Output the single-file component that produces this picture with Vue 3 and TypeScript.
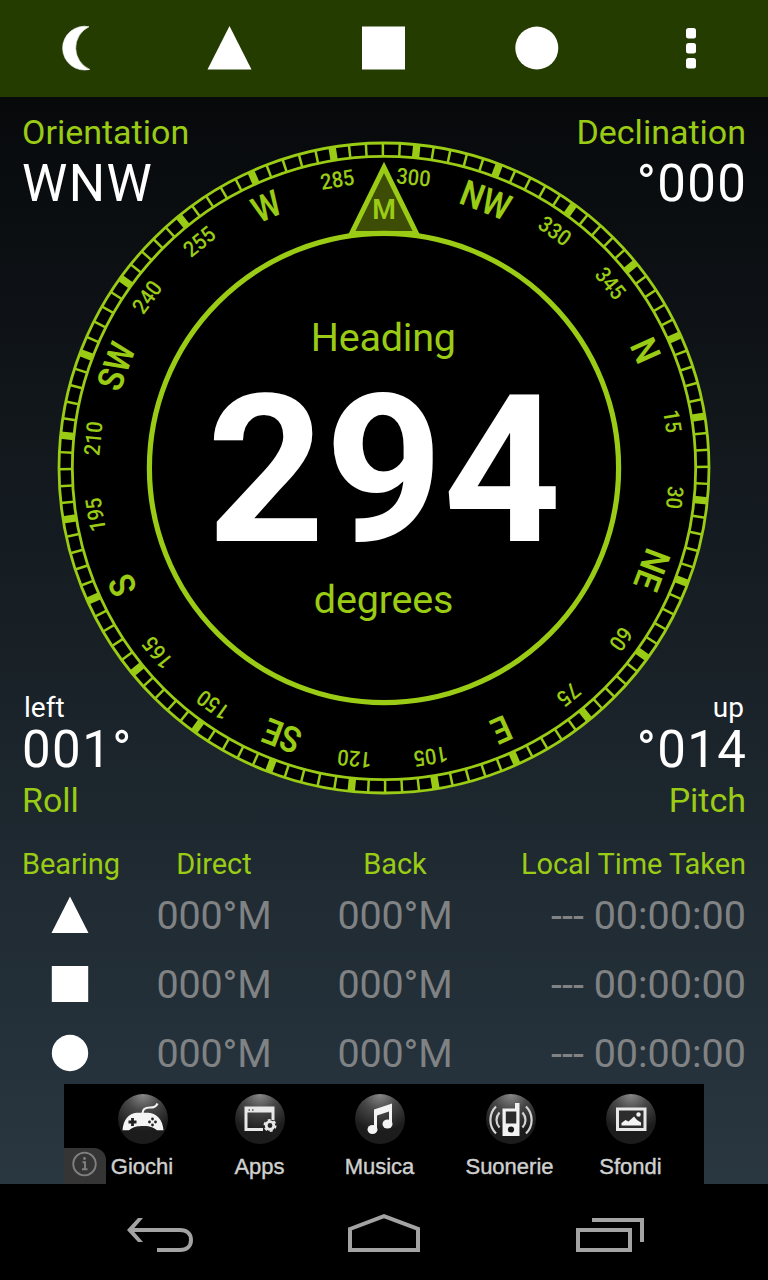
<script setup lang="ts">
interface DialLabel {
  angle: number
  text: string
  cardinal: boolean
}

type Shape = 'triangle' | 'square' | 'circle'

const heading = 294.2

const cardinals: Record<number, string> = {
  0: 'N', 45: 'NE', 90: 'E', 135: 'SE', 180: 'S', 225: 'SW', 270: 'W', 315: 'NW',
}

const labels: DialLabel[] = Array.from({ length: 24 }, (_, i) => {
  const deg = i * 15
  return { angle: deg - heading, text: cardinals[deg] ?? String(deg), cardinal: deg in cardinals }
})

const ticks = Array.from({ length: 120 }, (_, i) => ({
  angle: i * 3 - heading,
  major: i % 5 === 0,
}))

const bearings: { shape: Shape; direct: string; back: string; time: string }[] = [
  { shape: 'triangle', direct: '000°M', back: '000°M', time: '--- 00:00:00' },
  { shape: 'square', direct: '000°M', back: '000°M', time: '--- 00:00:00' },
  { shape: 'circle', direct: '000°M', back: '000°M', time: '--- 00:00:00' },
]
</script>

<template>
  <div class="screen">
    <header class="bar">
      <div class="slot">
        <svg width="44" height="48" viewBox="0 0 44 48"><path d="M34 2.700A21.900 21.900 0 1 0 34.800 45.400A23.500 23.500 0 0 1 34 2.700Z" fill="#fff" stroke="#fff" stroke-width=".6" stroke-linejoin="round" /></svg>
      </div>
      <div class="slot">
        <svg width="44" height="44" viewBox="0 0 44 44"><path d="M21.500 0L43.500 43.500H-.5Z" fill="#fff" /></svg>
      </div>
      <div class="slot">
        <svg width="44" height="44" viewBox="0 0 44 44"><rect x="0" y=".5" width="43" height="43" fill="#fff" /></svg>
      </div>
      <div class="slot">
        <svg width="44" height="44" viewBox="0 0 44 44"><circle cx="20.800" cy="22" r="21.500" fill="#fff" /></svg>
      </div>
      <div class="slot">
        <svg width="44" height="44" viewBox="0 0 44 44" fill="#fff">
          <rect x="17" y="2" width="10" height="10.500" rx="2.500" />
          <rect x="17" y="17" width="10" height="10.500" rx="2.500" />
          <rect x="17" y="32" width="10" height="10.500" rx="2.500" />
        </svg>
      </div>
    </header>

    <section class="stage">
      <svg class="dial" width="660" height="660" viewBox="-330 -330 660 660">
        <circle r="326" fill="#000" />
        <line
          v-for="t in ticks"
          :key="t.angle"
          y1="-325"
          y2="-312"
          stroke="#9acb15"
          :stroke-width="t.major ? 7.4 : 2.5"
          :transform="`rotate(${t.angle})`"
        />
        <circle r="325" class="ring" />
        <circle r="311.700" class="ring" />
        <text
          v-for="l in labels"
          :key="l.text"
          :class="l.cardinal ? 'cardinal' : 'degree'"
          :y="l.cardinal ? -274 : -284.5"
          :transform="`rotate(${l.angle}) scale(${l.cardinal ? 0.89 : 0.91}, 1)`"
        >{{ l.text }}</text>
        <path d="M-32.500 -234.500L0 -300.500L32.500 -234.500Z" fill="#3e4d05" stroke="#9acb15" stroke-width="5" />
        <circle r="234.600" fill="#000" stroke="#9acb15" stroke-width="5.200" />
        <text class="pointer" y="-249.500">M</text>
        <text class="caption" x="-.8" y="-117.500">Heading</text>
        <text class="heading" y="73">294</text>
        <text class="caption" x="-.5" y="144.500">degrees</text>
      </svg>

      <div class="readouts">
        <div class="pair">
          <div class="readout">
            <div class="label">Orientation</div>
            <div class="value">WNW</div>
          </div>
          <div class="readout right">
            <div class="label">Declination</div>
            <div class="value">°000</div>
          </div>
        </div>
        <div class="pair">
          <div class="readout">
            <div class="hint">left</div>
            <div class="value low">001°</div>
            <div class="label">Roll</div>
          </div>
          <div class="readout right">
            <div class="hint">up</div>
            <div class="value low">°014</div>
            <div class="label">Pitch</div>
          </div>
        </div>
      </div>
    </section>

    <section class="table">
      <div class="row head">
        <span>Bearing</span>
        <span class="mid">Direct</span>
        <span class="mid">Back</span>
        <span class="end">Local Time Taken</span>
      </div>
      <div v-for="b in bearings" :key="b.shape" class="row">
        <svg class="mark" width="38" height="38" viewBox="0 0 38 38" fill="#fff">
          <path v-if="b.shape === 'triangle'" d="M19 .5L37.500 37H.5Z" />
          <rect v-else-if="b.shape === 'square'" x=".8" y="1" width="36.400" height="36" />
          <circle v-else cx="19" cy="19" r="18.200" />
        </svg>
        <span class="mid">{{ b.direct }}</span>
        <span class="mid">{{ b.back }}</span>
        <span class="end time">{{ b.time }}</span>
      </div>
    </section>

    <section class="ad">
      <svg class="orbs" width="0" height="0">
        <defs>
          <radialGradient id="orb" cx=".5" cy="0" r=".75">
            <stop offset="0" stop-color="#8a8a8a" />
            <stop offset=".45" stop-color="#484848" />
            <stop offset="1" stop-color="#1c1c1c" />
          </radialGradient>
        </defs>
      </svg>
      <div class="info">
        <svg width="26" height="26" viewBox="0 0 26 26">
          <circle cx="12.500" cy="13" r="11.300" fill="none" stroke="#808080" stroke-width="1.800" />
          <path d="M10.500 11.200h2.500v6.600M10 18.300h5.500" fill="none" stroke="#808080" stroke-width="1.900" />
          <circle cx="12.500" cy="7.500" r="1.400" fill="#808080" />
        </svg>
      </div>
      <div class="link giochi">
        <svg width="52" height="52" viewBox="0 0 52 52">
          <circle cx="26" cy="26" r="25" fill="url(#orb)" />
          <path d="M25.500 20.500C25.500 15 29 14.500 33 14.500C37 14.500 39 14 40.500 10.500" fill="none" stroke="#f2f2f2" stroke-width="2.200" />
          <path d="M5.500 37.300C6 27 12 20 19.500 19.700H31.500C39.500 20 46 27 46.500 37.300H40C35.500 33.500 31 33 26 33C21 33 16.500 33.500 12 37.300Z" fill="#f4f4f4" />
          <path d="M15.500 25v8M11.500 29h8" stroke="#222" stroke-width="2.800" />
          <circle cx="32.500" cy="29" r="1.400" fill="#222" /><circle cx="38.500" cy="29" r="1.400" fill="#222" />
          <circle cx="35.500" cy="26" r="1.400" fill="#222" /><circle cx="35.500" cy="32" r="1.400" fill="#222" />
        </svg>
        <span>Giochi</span>
      </div>
      <div class="link apps">
        <svg width="52" height="52" viewBox="0 0 52 52">
          <circle cx="26" cy="26" r="25" fill="url(#orb)" />
          <path d="M29 36.500H12V15H39V27" fill="none" stroke="#e8e8e8" stroke-width="3" />
          <path d="M11 17.500H40" stroke="#e8e8e8" stroke-width="4" />
          <path d="M14.500 17h1.500M18 17h1.500" stroke="#555" stroke-width="1.500" />
          <circle cx="36" cy="32.500" r="3.800" fill="none" stroke="#e8e8e8" stroke-width="2.800" />
          <circle cx="36" cy="32.500" r="5.600" fill="none" stroke="#e8e8e8" stroke-width="1.800" stroke-dasharray="2.930 2.930" />
        </svg>
        <span>Apps</span>
      </div>
      <div class="link musica">
        <svg width="52" height="52" viewBox="0 0 52 52" fill="#f4f4f4">
          <circle cx="26" cy="26" r="25" fill="url(#orb)" />
          <path d="M20 16.500L38 10.500V31H35V18.500L23 22.500V36H20Z" />
          <ellipse cx="18.500" cy="36.500" rx="5" ry="4.600" />
          <ellipse cx="33.500" cy="31" rx="5" ry="4.600" />
        </svg>
        <span>Musica</span>
      </div>
      <div class="link suonerie">
        <svg width="56" height="52" viewBox="-3 0 56 52">
          <circle cx="26" cy="26" r="25" fill="url(#orb)" />
          <path d="M17.500 15.500H30V10H34.500V43H17.500Z" fill="#f2f2f2" />
          <rect x="20.800" y="18.500" width="10.500" height="12" fill="#2b2b2b" />
          <circle cx="26" cy="36.500" r="3.100" fill="#161616" />
          <g fill="none" stroke="#d4d4d4" stroke-width="2.200">
            <path d="M14.500 19.500C10.500 24 10.500 30 14.500 34.500" /><path d="M11 13.500C3.500 21 3.500 33 11 40.500" />
            <path d="M37.500 19.500C41.500 24 41.500 30 37.500 34.500" /><path d="M41 13.500C48.500 21 48.500 33 41 40.500" />
          </g>
        </svg>
        <span>Suonerie</span>
      </div>
      <div class="link sfondi">
        <svg width="52" height="52" viewBox="0 0 52 52">
          <circle cx="26" cy="26" r="25" fill="url(#orb)" />
          <rect x="12.500" y="16" width="27.500" height="20.500" fill="#2d2d2d" stroke="#e8e8e8" stroke-width="3" />
          <path d="M16.500 32.500V30L20.500 27L23.500 28.500L29 23.500L32 27L36 29.500V32.500Z" fill="#f4f4f4" />
          <circle cx="33.500" cy="21.500" r="2.200" fill="#f4f4f4" />
        </svg>
        <span>Sfondi</span>
      </div>
    </section>

    <nav class="nav">
      <svg width="768" height="96" viewBox="0 0 768 96" fill="none" stroke="#a3a3a3" stroke-width="4">
        <path d="M129 46H180C187 46 191 50 191 56C191 62 187 66 180 66H157" />
        <path d="M127 46L138 34H143L132.500 46L143 58H138Z" fill="#a3a3a3" stroke="none" />
        <path d="M350 45L384 32.200L418 45V66H350Z" />
        <path d="M578 46H630V66H578Z" />
        <path d="M592 36H642V58" />
      </svg>
    </nav>
  </div>
</template>

<style>
body {
  margin: 0;
  background: #000;
}
</style>

<style scoped>
.screen {
  width: 768px;
  height: 1280px;
  overflow: hidden;
  display: flex;
  flex-direction: column;
  font-family: Roboto, "Liberation Sans", sans-serif;
  background: linear-gradient(#07090b 97px, #293741 1184px);
  white-space: nowrap;
}
.bar {
  height: 97px;
  flex: none;
  display: flex;
  box-sizing: border-box;
  padding-bottom: 1px;
  background: #243c00;
}
.slot {
  flex: 1;
  display: flex;
  align-items: center;
  justify-content: center;
}
.slot svg {
  display: block;
  overflow: visible;
}
.stage {
  height: 749px;
  flex: none;
  display: grid;
}
.dial {
  grid-area: 1 / 1;
  justify-self: center;
  margin-top: 40.500px;
}
.ring {
  fill: none;
  stroke: #9acb15;
  stroke-width: 2.800px;
}
.dial text {
  text-anchor: middle;
  fill: #9acb15;
}
.dial .degree {
  font-size: 22px;
  font-weight: 500;
}
.dial .cardinal {
  font-size: 36px;
  font-weight: 600;
}
.dial .pointer {
  font-size: 27px;
  font-weight: 600;
}
.dial .caption {
  font-size: 39.500px;
  letter-spacing: -0.200px;
}
.dial .heading {
  font-size: 206px;
  font-weight: 700;
  fill: #fff;
}
.readouts {
  grid-area: 1 / 1;
  display: flex;
  flex-direction: column;
  justify-content: space-between;
  padding: 15px 22px 26px;
}
.pair {
  display: flex;
  justify-content: space-between;
}
.right {
  text-align: right;
}
.label {
  font-size: 34px;
  line-height: 40px;
  color: #9acb15;
}
.value {
  font-size: 51px;
  line-height: 60px;
  letter-spacing: 1.400px;
  margin-top: 2px;
  color: #fff;
}
.right .value {
  margin-right: -1.400px;
}
.value.low {
  line-height: 54px;
  margin-top: -2px;
  margin-bottom: 3px;
}
.hint {
  font-size: 28px;
  line-height: 34px;
  padding: 0 2px;
  color: #fff;
}
.table {
  height: 238px;
  flex: none;
  padding: 0 22px;
  box-sizing: border-box;
}
.row {
  display: grid;
  grid-template-columns: 95px 194px 168px 1fr;
  align-items: center;
  height: 60px;
  margin-bottom: 9px;
  font-size: 39.500px;
  letter-spacing: -0.200px;
  color: #808284;
}
.row.head {
  height: 36px;
  margin-bottom: 3px;
  font-size: 29px;
  letter-spacing: -0.050px;
  color: #9acb15;
}
.mark {
  display: block;
  justify-self: center;
}
.mid {
  text-align: center;
}
.end {
  text-align: right;
}
.time {
  letter-spacing: 0;
}
.ad {
  position: relative;
  width: 640px;
  height: 100px;
  flex: none;
  align-self: center;
  display: flex;
  background: #000;
  font-family: "Liberation Sans", Arial, sans-serif;
  font-size: 22px;
  color: #d0d0d0;
}
.orbs {
  position: absolute;
}
.info {
  width: 42px;
  height: 36px;
  align-self: flex-end;
  flex: none;
  display: flex;
  justify-content: center;
  padding-top: 3px;
  box-sizing: border-box;
  background: #353535;
  border-top-right-radius: 12px;
}
.link {
  display: flex;
  flex-direction: column;
  align-items: center;
  flex: none;
  padding-top: 9px;
  line-height: 26px;
}
.link svg {
  display: block;
}
.link span {
  margin-top: 9px;
  margin-right: 1px;
  -webkit-text-stroke: 0.400px #d0d0d0;
}
.giochi {
  width: 73px;
}
.apps {
  width: 162px;
}
.musica {
  width: 78px;
}
.suonerie {
  width: 182px;
}
.sfondi {
  width: 60px;
}
.nav {
  height: 96px;
  flex: none;
  background: #000;
}
.nav svg {
  display: block;
}
</style>
